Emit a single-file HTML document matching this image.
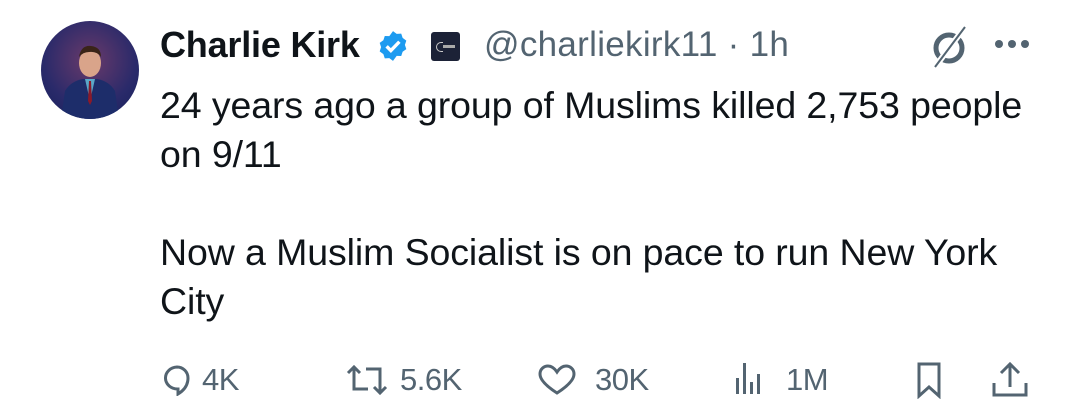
<!DOCTYPE html>
<html><head><style>
body{margin:0;width:1080px;height:418px;background:#fff;font-family:"Liberation Sans",Arial,sans-serif;color:#0f1419;position:relative;overflow:hidden}
.av{position:absolute;left:41px;top:21px;width:98px;height:98px;border-radius:50%;overflow:hidden;background:radial-gradient(circle at 50% 40%,#6a3a6a,#2a2a6a 60%,#15205a)}
.name{position:absolute;left:160px;top:24px;font-size:36px;font-weight:bold;letter-spacing:-0.2px}
.handle{position:absolute;left:484px;top:25px;font-size:35px;color:#536471;letter-spacing:0.3px}
.body{position:absolute;left:160px;top:81px;font-size:37.5px;line-height:49px;width:920px;letter-spacing:-0.1px}
.act{position:absolute;top:362px;font-size:31px;color:#536471;letter-spacing:-0.5px}
</style></head><body>
<div class="av">
<svg width="98" height="98" viewBox="0 0 98 98"><path d="M20 98 L24 70 Q30 60 42 58 L56 58 Q68 60 74 70 L78 98Z" fill="#1d2d6a"/><path d="M44 58 L49 80 L54 58Z" fill="#5aa8c8"/><path d="M48 60 L47 80 L49 84 L51 80 L50 60Z" fill="#8a1a2a"/><ellipse cx="49" cy="42" rx="11" ry="14" fill="#d9a48a"/><path d="M38 36 Q40 24 50 25 Q60 26 60 36 Q56 30 48 31 Q42 31 38 36Z" fill="#3a2418"/></svg>
</div>
<div class="name">Charlie Kirk</div>
<svg style="position:absolute;left:376px;top:29px" width="34" height="34" viewBox="0 0 24 24"><path d="M12 1.5l2.6 1.9 3.2-.1 1 3 2.6 1.9-1 3 1 3-2.6 1.9-1 3-3.2-.1L12 22.5l-2.6-1.9-3.2.1-1-3-2.6-1.9 1-3-1-3 2.6-1.9 1-3 3.2.1z" fill="#1d9bf0"/><path d="M7.5 12.2l3 3 6-6.2" stroke="#fff" stroke-width="2.4" fill="none"/></svg>
<div style="position:absolute;left:431px;top:32px;width:29px;height:29px;background:#1c2237;border-radius:3px"><div style="position:absolute;left:5px;top:10px;width:6px;height:8px;border:1.5px solid #ccc;border-right:none;border-radius:6px 0 0 6px"></div><div style="position:absolute;left:12px;top:13px;width:12px;height:3px;background:#aaa"></div></div>
<div class="handle">@charliekirk11 · 1h</div>
<svg style="position:absolute;left:925px;top:22px" width="50" height="50" viewBox="0 0 50 50"><circle cx="24" cy="26" r="13" stroke="#536471" stroke-width="5" fill="none"/><path d="M40 5 L10 45" stroke="#fff" stroke-width="6"/><path d="M40 5 L10 45" stroke="#536471" stroke-width="2"/></svg>
<div style="position:absolute;left:995px;top:40px;width:8px;height:8px;border-radius:50%;background:#536471;box-shadow:13px 0 #536471,26px 0 #536471"></div>
<div class="body">24 years ago a group of Muslims killed 2,753 people<br>on 9/11<br><br>Now a Muslim Socialist is on pace to run New York<br>City</div>
<svg style="position:absolute;left:162px;top:364px" width="30" height="32" viewBox="0 0 30 32" fill="none" stroke="#536471" stroke-width="3"><path d="M15 3a12 11 0 1 0 1 22l0 5 q10-6 10-16 a11 11 0 0 0-11-11z"/></svg>
<div class="act" style="left:202px">4K</div>
<svg style="position:absolute;left:344px;top:364px" width="48" height="32" viewBox="0 0 48 32" fill="none" stroke="#536471" stroke-width="3"><path d="M4 9 L10 3 L16 9 M10 3 V25 H24"/><path d="M22 5 H36 V28 M30 23 L36 29 L42 23"/></svg>
<div class="act" style="left:400px">5.6K</div>
<svg style="position:absolute;left:538px;top:364px" width="38" height="32" viewBox="0 0 38 32" fill="none" stroke="#536471" stroke-width="3"><path d="M19 29 C5 20 2 14 2 10 C2 5 6 2 10 2 C14 2 17 5 19 8 C21 5 24 2 28 2 C32 2 36 5 36 10 C36 14 33 20 19 29Z"/></svg>
<div class="act" style="left:595px">30K</div>
<svg style="position:absolute;left:734px;top:360px" width="30" height="36" viewBox="0 0 30 36" fill="#536471"><rect x="2" y="18" width="3" height="16"/><rect x="9" y="3" width="3" height="31"/><rect x="16" y="22" width="3" height="12"/><rect x="23" y="14" width="3" height="20"/></svg>
<div class="act" style="left:786px">1M</div>
<svg style="position:absolute;left:914px;top:361px" width="30" height="38" viewBox="0 0 30 38" fill="none" stroke="#536471" stroke-width="3"><path d="M5 3 H25 V35 L15 26 L5 35Z"/></svg>
<svg style="position:absolute;left:990px;top:361px" width="40" height="38" viewBox="0 0 40 38" fill="none" stroke="#536471" stroke-width="3"><path d="M20 26 V4 M11 12 L20 3 L29 12 M4 22 V34 H36 V22"/></svg>
</body></html>
